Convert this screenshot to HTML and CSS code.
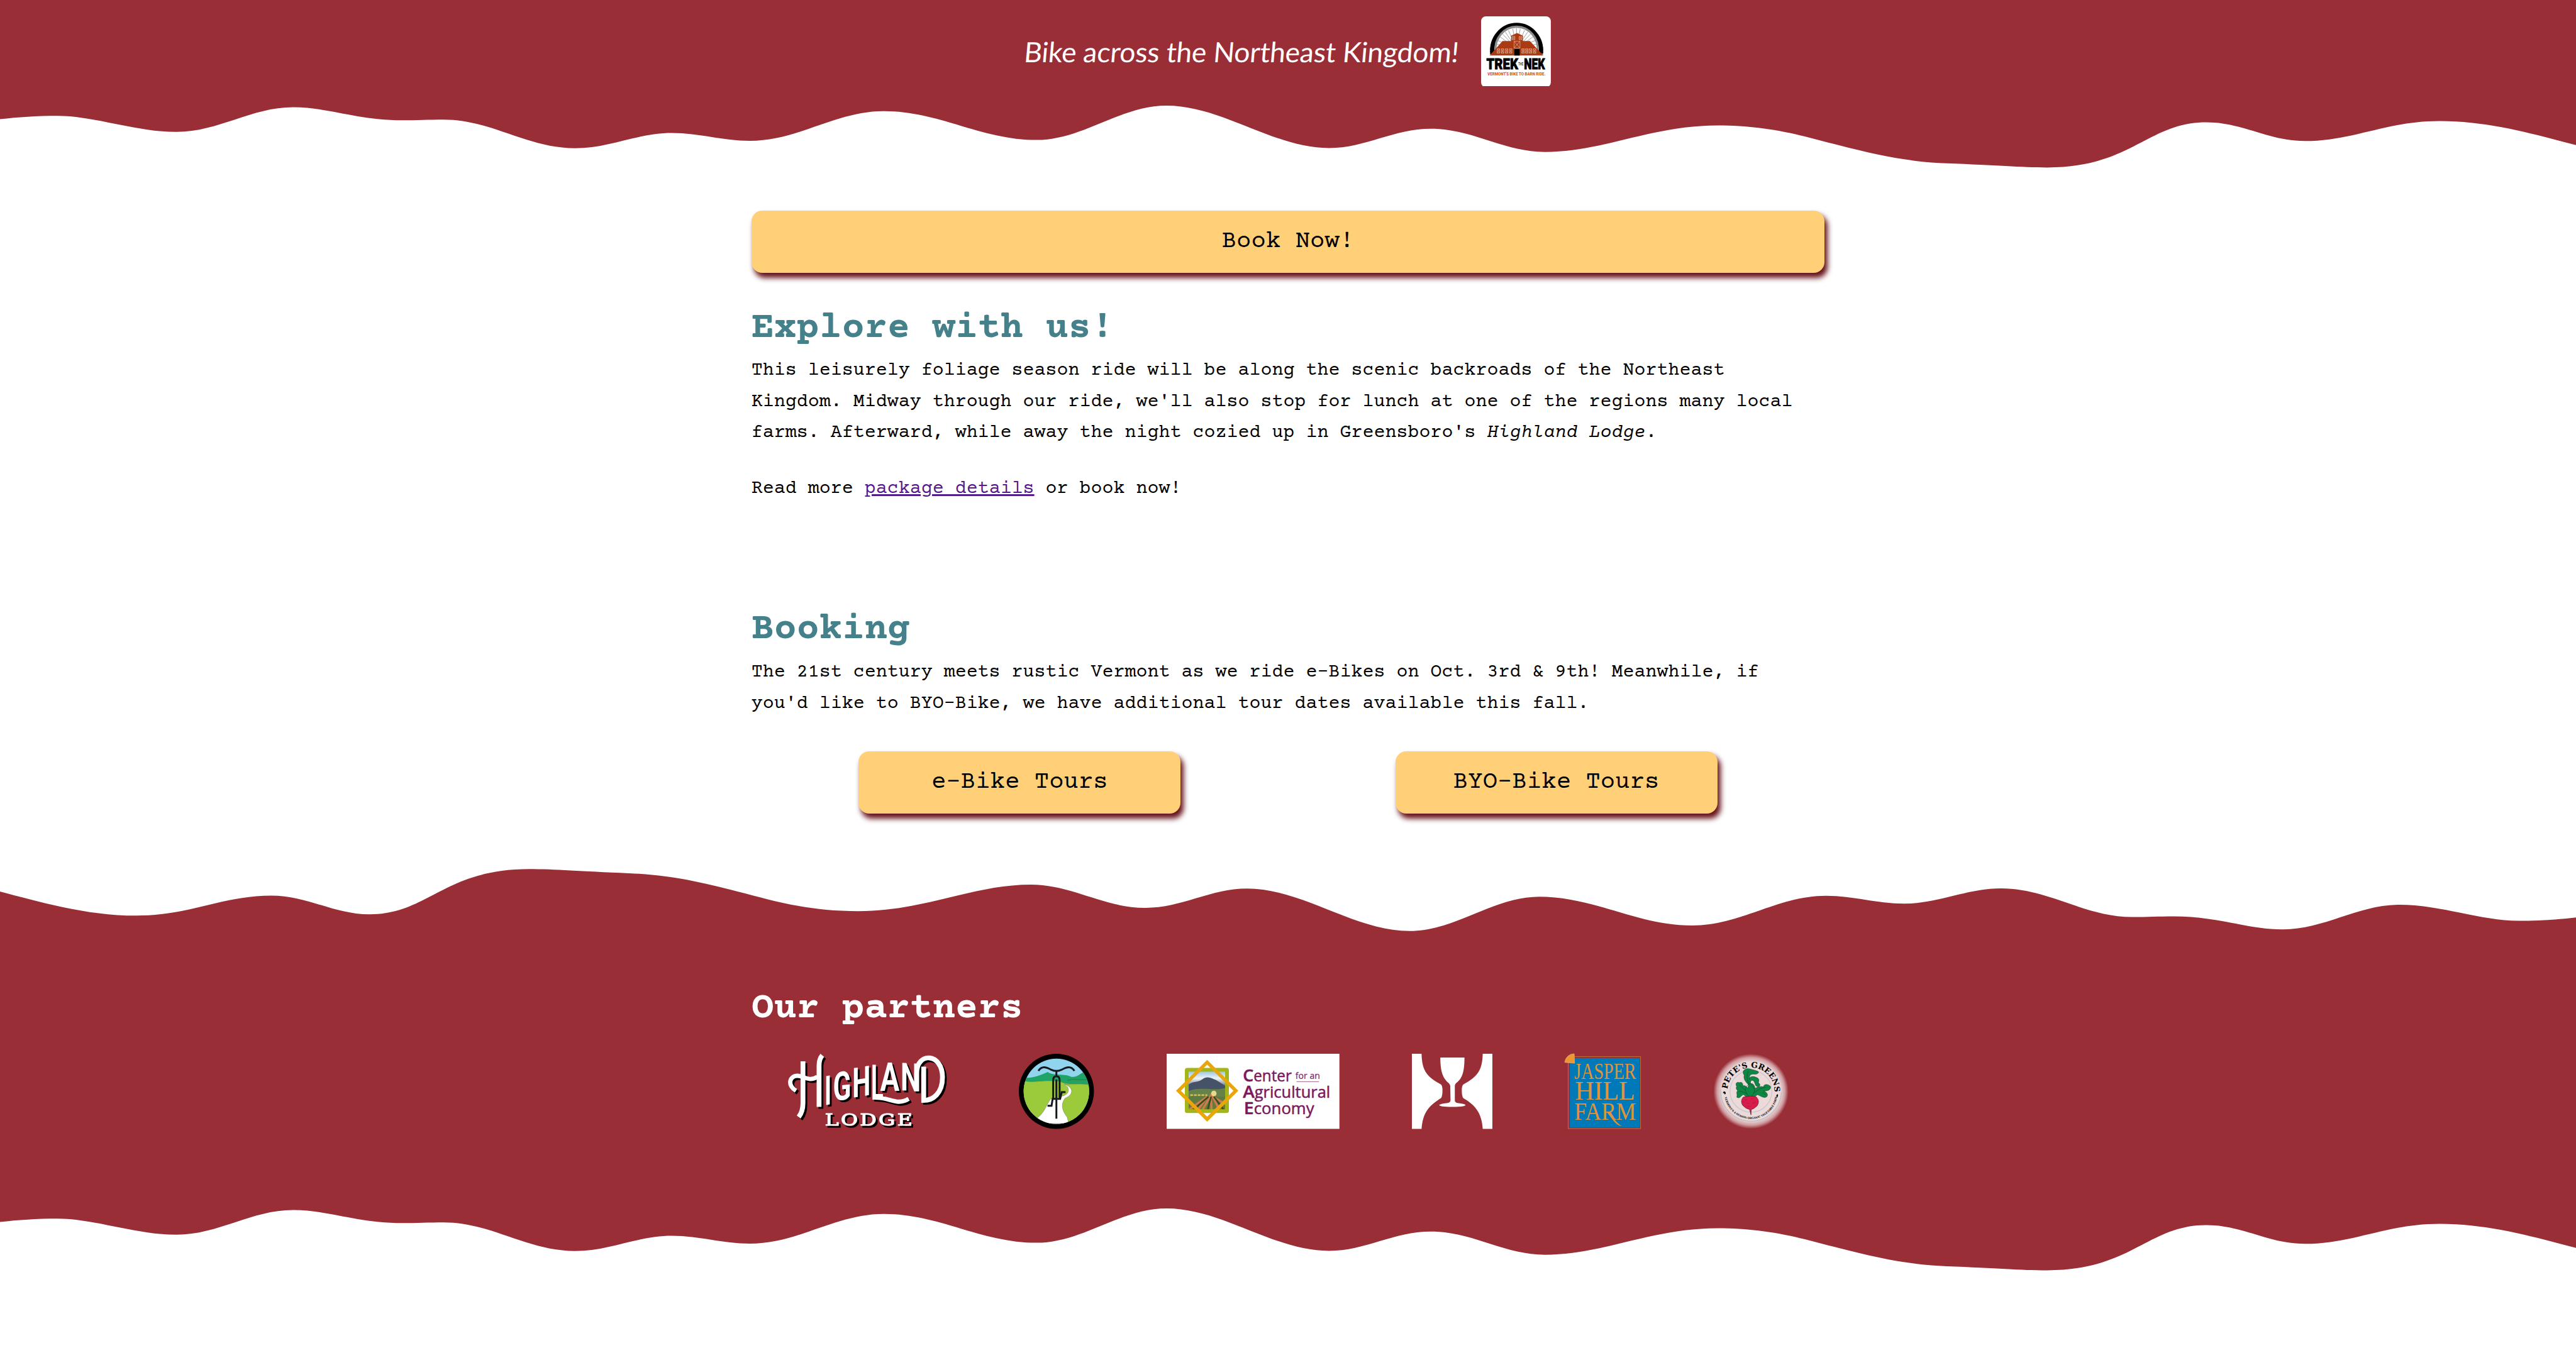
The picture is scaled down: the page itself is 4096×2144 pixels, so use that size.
FILE: index.html
```html
<!DOCTYPE html>
<html lang="en">
<head>
<meta charset="utf-8">
<title>Bike across the Northeast Kingdom!</title>
<link rel="stylesheet" href="styles.css">
</head>
<body>
<svg class="defs" width="0" height="0" aria-hidden="true">
  <defs>
    <path id="wave" d="M0,-60V185C22,173 45,166 70,166C115,166 165,256 215,256C266,256 306,118 357,118C400,118 435,191 490,191C508,191 522,187 540,187C598,187 642,347 700,347C742,347 776,262 818,262C852,262 879,306 913,306C972,306 1017,140 1076,140C1143,140 1195,301 1262,301C1318,301 1364,109 1420,109C1488,109 1550,346 1618,346C1662,346 1697,238 1742,238C1792,238 1831,368 1881,368C1952,368 2010,220 2091,220C2155,220 2195,280 2238,330C2285,385 2320,422 2370,432C2430,442 2460,455 2492,455C2595,455 2615,202 2686,202C2730,202 2761,307 2806,307C2865,307 2905,195 2970,195C3032,195 3090,275 3136,330V-60Z"/>
  </defs>
</svg>

<header class="site-header">
  <p class="tagline">Bike across the Northeast Kingdom!</p>
  <svg class="site-logo" viewBox="0 0 130 132" role="img" aria-label="Trek the NEK">
    <rect width="130" height="132" rx="9" fill="#fff"/>
    <path d="M19.500,71A47,47 0 1 1 113,71" fill="none" stroke="#000" stroke-width="2.500" stroke-dasharray="2.200 1.800" transform="translate(-1.700 -2.200) scale(1.026)"/>
    <path d="M21,69A45.500,48 0 1 1 111.500,69" fill="none" stroke="#000" stroke-width="8"/>
    <path d="M27,66A39.500,42 0 1 1 105.500,66" fill="none" stroke="#8d8d8d" stroke-width="4"/>
    <path d="M66,60L66,22M66,60L59,23M66,60L73,23M66,60L51,26M66,60L81,26M66,60L45,29M66,60L87,29M66,60L40,33M66,60L92,33M66,60L35,38M66,60L97,38M66,60L31,45M66,60L101,45M66,60L29,52M66,60L103,52" stroke="#999" stroke-width="1.100"/>
    <path d="M16,73L40,46H56V36L67,31L78,36V46H91L116,73Z" fill="#a93a12"/>
    <rect x="62" y="61" width="10" height="12" fill="#000"/>
    <g fill="none" stroke="#dcae98" stroke-width=".9">
      <path d="M61.500,46.500h11v12.500h-11zl11,12.500m0,-12.500l-11,12.500"/>
      <path d="M58,37.500h5v6h-5zl5,6m0,-6l-5,6M71,37.500h5v6h-5zl5,6m0,-6l-5,6"/>
      <path d="M30,60.500h4.500v8h-4.500zl4.500,8m0,-8l-4.500,8M37.700,60.500h4.500v8h-4.500zl4.500,8m0,-8l-4.500,8M45.400,60.500h4.500v8h-4.500zl4.500,8m0,-8l-4.500,8M53,60.500h4.500v8h-4.500zl4.500,8m0,-8l-4.500,8M76,60.500h4.500v8h-4.500zl4.500,8m0,-8l-4.500,8M83,60.500h4.500v8h-4.500zl4.500,8m0,-8l-4.500,8M90,60.500h4.500v8h-4.500zl4.500,8m0,-8l-4.500,8M97.500,60.500h4.500v8h-4.500zl4.500,8m0,-8l-4.500,8"/>
    </g>
    <g font-family="Roboto, sans-serif" font-weight="900">
      <text x="10" y="98.500" font-size="28" textLength="59" lengthAdjust="spacingAndGlyphs" stroke="#000">TREK</text>
      <text x="80" y="98.500" font-size="28" textLength="39" lengthAdjust="spacingAndGlyphs" stroke="#000">NEK</text>
      <text x="69.500" y="92" font-size="8.500" font-weight="500" textLength="9" lengthAdjust="spacingAndGlyphs">THE</text>
      <text x="12" y="109.800" font-size="8" fill="#f2561d" textLength="108" lengthAdjust="spacingAndGlyphs">VERMONT'S BIKE TO BARN RIDE.</text>
    </g>
  </svg>
</header>
<svg class="wave" viewBox="0 0 3136 540" preserveAspectRatio="none" aria-hidden="true"><use href="#wave"/></svg>

<main class="content">
  <a class="button button-wide">Book Now!</a>
  <section class="explore">
    <h2>Explore with us!</h2>
    <p>This leisurely foliage season ride will be along the scenic backroads of the Northeast Kingdom. Midway through our ride, we'll also stop for lunch at one of the regions many local farms. Afterward, while away the night cozied up in Greensboro's <em>Highland Lodge</em>.</p>
    <p>Read more <a class="link" href="#booking">package details</a> or book now!</p>
  </section>
  <section class="booking" id="booking">
    <h2>Booking</h2>
    <p>The 21st century meets rustic Vermont as we ride e-Bikes on Oct. 3rd &amp; 9th! Meanwhile, if you'd like to BYO-Bike, we have additional tour dates available this fall.</p>
    <div class="tours">
      <a class="button">e-Bike Tours</a>
      <a class="button">BYO-Bike Tours</a>
    </div>
  </section>
</main>

<svg class="wave" viewBox="0 0 3136 540" preserveAspectRatio="none" aria-hidden="true"><use href="#wave" transform="translate(3136 516) rotate(180)"/></svg>
<footer class="partners">
  <div class="partners-inner">
    <h2>Our partners</h2>
    <div class="logos">
      <svg class="logo highland" viewBox="0 0 296 140" role="img" aria-label="Highland Lodge">
        <g fill="#fff" font-family="Roboto, sans-serif" font-weight="700">
          <g fill="none" stroke="#fff" stroke-width="9">
            <path d="M29,14V92Q29,108 21,118"/>
            <path d="M59,99V22Q59,10 65,3"/>
            <path d="M16,69C-1,58 4,41 19,41C30,41 40,53 56,43" stroke-width="8"/>
            <path d="M164,82C188,80 204,98 226,84" stroke-width="8"/>
            <path d="M244,68V34C244,-6 292,-4 292,42C292,72 274,85 257,85V22" stroke-width="9" transform="translate(-3 2)"/>
          </g>
          <text transform="translate(69 96) skewY(-10)" font-size="76" textLength="13" lengthAdjust="spacingAndGlyphs">I</text>
          <text transform="translate(85 88) skewY(-6)" font-size="74" textLength="34" lengthAdjust="spacingAndGlyphs">G</text>
          <text transform="translate(121 82) skewY(-9)" font-size="77" textLength="34" lengthAdjust="spacingAndGlyphs">H</text>
          <text transform="translate(156 85)" font-size="92" textLength="23" lengthAdjust="spacingAndGlyphs">L</text>
          <text transform="translate(173 69)" font-size="73" textLength="36" lengthAdjust="spacingAndGlyphs">A</text>
          <text transform="translate(211 68) skewY(3)" font-size="72" textLength="36" lengthAdjust="spacingAndGlyphs">N</text>
          <text x="70" y="134" font-size="30" font-weight="400" letter-spacing="3" textLength="167" lengthAdjust="spacingAndGlyphs" font-family="DejaVu Serif, serif" stroke="#fff" stroke-width="1.400">LODGE</text>
        </g>
      </svg>
      <svg class="logo round" viewBox="0 0 140 140" role="img" aria-label="Bicycle on a country road">
        <clipPath id="scene"><circle cx="70" cy="70" r="61"/></clipPath>
        <circle cx="70" cy="70" r="70"/>
        <g clip-path="url(#scene)">
          <rect width="140" height="140" fill="#90d4ee"/>
          <path d="M5,45C28,46 40,40 54,34C64,42 84,36 98,43C112,44 112,36 135,28V70H5Z" fill="#1fa367"/>
          <path d="M90,50C105,44 116,52 135,46" fill="none" stroke="#167a4c"/>
          <path d="M5,50C35,56 40,48 78,52C92,60 112,54 135,58V140H5Z" fill="#9bca3b"/>
          <path d="M78,52C84,54 88,58 94,57C112,55 120,56 132,58M88,52C100,48 120,52 132,50" fill="none" stroke="#5c8f35" stroke-width=".7"/>
          <path d="M85,57C102,62 103,76 86,83C78,94 80,105 90,118L93,130H40L34,120C50,108 52,92 60,84C78,80 98,78 91,62Z" fill="#fff" stroke="#777" stroke-width=".6"/>
        </g>
        <g fill="none" stroke="#15181c" stroke-width="3.500">
          <path d="M36.500,32C44,20 54,27 61,30Q70,34 79,30C86,27 96,20 103.500,32M70,32V43M64,84V50Q64,42 70,42Q76,42 76,50V84M70,48V121"/>
          <path d="M53.500,97H61L63,84H77L80,71.500H87"/>
        </g>
      </svg>
      <svg class="logo cae" viewBox="0 0 322 140" role="img" aria-label="Center for an Agricultural Economy">
        <defs>
          <linearGradient id="farm" x2="0" y2="1"><stop offset="0" stop-color="#8fbfe4"/><stop offset=".2" stop-color="#eef3f5"/><stop offset=".4" stop-color="#677287"/><stop offset=".52" stop-color="#587a4a"/><stop offset="1" stop-color="#6a7a34"/></linearGradient>
        </defs>
        <rect width="322" height="140" fill="#fff"/>
        <rect x="38" y="31" width="74" height="75" fill="url(#farm)"/>
        <path d="M40,58C50,50 58,54 66,48C76,40 84,46 92,49L110,60V72H40Z" fill="#465268"/>
        <path d="M40,70C60,60 86,70 110,64V80H40Z" fill="#65824a"/>
        <path d="M42,104L76,80L58,105M66,106L82,78L84,106M98,104L86,80L110,94" stroke="#cf7b4b" stroke-width="4" fill="none"/>
        <path d="M50,104L78,80M76,106L83,80M106,104L88,80" stroke="#354d22" stroke-width="3"/>
        <circle cx="88" cy="74" r="5" fill="#e9d98a"/>
        <path d="M44,77H76" stroke="#d0c25a" stroke-width="3" stroke-dasharray="5 2"/>
        <rect x="37.500" y="30" width="75" height="77" rx="1" fill="none" stroke="#a3b517" stroke-width="7"/>
        <path d="M22,69L75.500,16L129,69L75.500,122Z" fill="none" stroke="#e9a60c" stroke-width="6.500"/>
        <g fill="#7a1a5c" font-family="Open Sans, sans-serif" stroke="#7a1a5c" stroke-width=".6">
          <text x="142" y="52" font-size="32" textLength="91" lengthAdjust="spacingAndGlyphs"><tspan font-weight="600">C</tspan><tspan font-size="29">enter</tspan></text>
          <text x="240" y="47" font-size="17" textLength="46" lengthAdjust="spacingAndGlyphs" stroke-width=".2">for an</text>
          <path d="M242,52H284" stroke-width=".8"/>
          <text x="142" y="82" font-size="32" textLength="163" lengthAdjust="spacingAndGlyphs"><tspan font-weight="600">A</tspan><tspan font-size="29">gricultural</tspan></text>
          <text x="144" y="112" font-size="32" textLength="131" lengthAdjust="spacingAndGlyphs"><tspan font-weight="600">E</tspan><tspan font-size="29">conomy</tspan></text>
        </g>
      </svg>
      <svg class="logo hill" viewBox="0 0 150 140" role="img" aria-label="Hill Farmstead">
        <g fill="#fff">
          <path d="M0,0H18C19,30 26,42 54,57Q57,59 57,68Q57,80 54,83C28,98 20,114 18,140H0Z"/>
          <path d="M150,0H132C131,30 124,42 96,57Q93,59 93,68Q93,80 96,83C122,98 130,114 132,140H150Z"/>
          <path d="M53,7H98C98,36 93,47 82,55Q80,57 80,60L80,87Q80,91 86,92C106,94 106,99 75,99C45,99 45,94 65,92Q72,91 72,87L71.500,60Q71,57 69,55C58,46 53,34 53,7Z"/>
        </g>
      </svg>
      <svg class="logo jasper" viewBox="0 0 142 140" role="img" aria-label="Jasper Hill Farm">
        <rect x="6.500" y="5.500" width="135" height="134" fill="none" stroke="#cf7a30"/>
        <rect x="9.500" y="8" width="130" height="129.500" fill="#0079b8"/>
        <path d="M18.500,17.700L0,16A18,18 0 0 1 17.700,0Z" fill="#ee9630" stroke="#e9b47f" stroke-width=".8"/>
        <g fill="#e0933a" font-family="Liberation Serif, serif">
          <text x="18" y="46.500" font-size="42" textLength="115" lengthAdjust="spacingAndGlyphs">JASPER</text>
          <text x="19" y="86" font-size="50" textLength="112" lengthAdjust="spacing">HILL</text>
          <text x="18" y="123" font-size="47" textLength="115" lengthAdjust="spacingAndGlyphs">FARM</text>
          <path d="M78,108C88,120 96,136 107,134.500C100,133 92,122 84,109Z"/>
        </g>
      </svg>
      <svg class="logo round" viewBox="0 0 140 140" role="img" aria-label="Pete's Greens">
        <defs>
          <radialGradient id="glow"><stop offset=".78" stop-color="#ecd9da"/><stop offset=".9" stop-color="#ecd9da" stop-opacity=".65"/><stop offset="1" stop-color="#ecd9da" stop-opacity="0"/></radialGradient>
          <path id="arc-top" d="M26.800,66A43.700,43.700 0 0 1 114.200,73"/>
          <path id="arc-bottom" d="M21,76A49.500,49.500 0 0 0 119.500,78"/>
        </defs>
        <circle cx="70.500" cy="70" r="70" fill="url(#glow)"/>
        <circle cx="70.500" cy="70" r="39" fill="none" stroke="#c3c6ca" stroke-width="1.300"/>
        <path d="M14,66A56.500,56.500 0 0 0 127,72" fill="none" stroke="#b9bfc3" stroke-width="1.500"/>
        <g font-family="DejaVu Serif, serif">
          <text font-size="14.500" font-weight="700"><textPath href="#arc-top" textLength="136" lengthAdjust="spacingAndGlyphs">PETE'S GREENS</textPath></text>
          <text font-size="5" font-weight="700"><textPath href="#arc-bottom" startOffset="5" textLength="138" lengthAdjust="spacingAndGlyphs">VERMONT'S 4-SEASON ORGANIC VEGETABLE FARM</textPath></text>
        </g>
        <path d="M20,70q5,1 3,5l-2,1q1,-3 -3,-3zM118,77q3,-3 3,0l-1,4q-3,0 -2,-4z"/>
        <path d="M66,80C60,82 58,76 56,76C50,80 50,84 44,81C46,76 42,72 46,69C42,66 43,62 44,61C40,54 46,52 49,54C54,52 56,56 55,60C60,58 62,62 65,64L66,58C60,52 56,46 58,40C52,32 60,27 67,28C74,30 76,30 81,32C89,34 82,39 77,38C68,37 67,42 68,48C66,43 74,41 80,44C86,46 86,50 84,54C88,56 88,60 85,61C78,63 79,54 75,50C70,48 69,52 70,56C74,54 78,60 78,65C82,62 90,60 94,62C94,56 102,56 107,61C108,68 100,70 94,69C100,72 103,76 100,80C94,84 88,78 82,76C80,80 74,80 70,80Z" fill="#0c8744" stroke="#17472c" stroke-width=".8"/>
        <path d="M64,76C56,66 62,60 69,55C78,64 80,70 72,78M48,70Q58,70 65,77M76,73Q86,64 98,62M67,58Q60,42 66,32M92,72L98,77M48,58L60,68" fill="none" stroke="#17472c" stroke-width=".8"/>
        <path d="M56,81Q68,77 80,80Q88,88 82,97Q76,103 71,104L70.500,114L68,104Q60,102 55,96Q50,88 56,81Z" fill="#d81c4c" stroke="#5e1528" stroke-width=".8"/>
        <path d="M58,86q3,-2 5,0M70,84q4,-1 6,1M62,92q3,1 5,0M73,92q4,0 6,-2M64,98h5M55,90h3" fill="none" stroke="#8c1533" stroke-width=".7"/>
      </svg>
    </div>
  </div>
</footer>
<svg class="wave" viewBox="0 0 3136 540" preserveAspectRatio="none" aria-hidden="true"><use href="#wave"/></svg>
</body>
</html>
```
FILE: styles.css
```css
html {
  font-size: 8.53333px;
  background: #fff;
}

body {
  margin: 0;
  font-family: "Courier Prime", "Liberation Mono", monospace;
  font-size: 3.52rem;
  line-height: 5.8rem;
  color: #000;
}

h2,
p {
  margin: 0;
}

h2 {
  font-size: 7.04rem;
  line-height: 8rem;
  color: #45818a;
}

svg {
  display: block;
}

.defs {
  position: absolute;
}

.site-header {
  display: flex;
  justify-content: center;
  gap: 4rem;
  height: 16rem;
  background: #992e36;
}

.tagline {
  width: 81rem;
  padding-top: 6.1rem;
  font-family: Lato, sans-serif;
  font-size: 5.2rem;
  line-height: 7rem;
  letter-spacing: -0.02rem;
  white-space: nowrap;
  color: #fff;
  transform: skewX(-5deg);
}

.site-logo {
  width: 13rem;
  height: 13.2rem;
  margin-top: 3rem;
}

.wave {
  width: 100%;
  height: 18rem;
  fill: #992e36;
}

.content {
  box-sizing: border-box;
  width: 200rem;
  height: 126rem;
  margin: 0 auto;
  padding-top: 5.25rem;
}

.button {
  display: block;
  width: 60rem;
  border-radius: 2rem;
  background: #ffd077;
  box-shadow: 0.5rem 0.9rem 1rem #66121b;
  font-size: 4.576rem;
  line-height: 11.6rem;
  text-align: center;
}

.button-wide {
  width: 100%;
}

.explore {
  padding-top: 6.4rem;
}

.explore p,
.booking p {
  margin-top: 1rem;
}

.explore p + p {
  margin-top: 4.64rem;
}

.link {
  color: #551a8b;
}

.booking {
  padding-top: 19.39rem;
}

.tours {
  display: flex;
  justify-content: space-around;
  padding-top: 5.97rem;
}

.partners {
  background: #992e36;
}

.partners-inner {
  width: 200rem;
  margin: 0 auto;
  padding: 6.12rem 0 11.2rem;
}

.partners h2 {
  color: #fff;
}

.logos {
  display: flex;
  justify-content: space-around;
  padding-top: 4.28rem;
}

.logo {
  height: 14rem;
  overflow: visible;
}

.highland {
  width: 29.6rem;
  filter: drop-shadow(0.45rem 0.45rem 0 #000);
}

.round {
  width: 14rem;
}

.cae {
  width: 32.2rem;
}

.hill {
  width: 15rem;
}

.jasper {
  width: 14.2rem;
}
```
